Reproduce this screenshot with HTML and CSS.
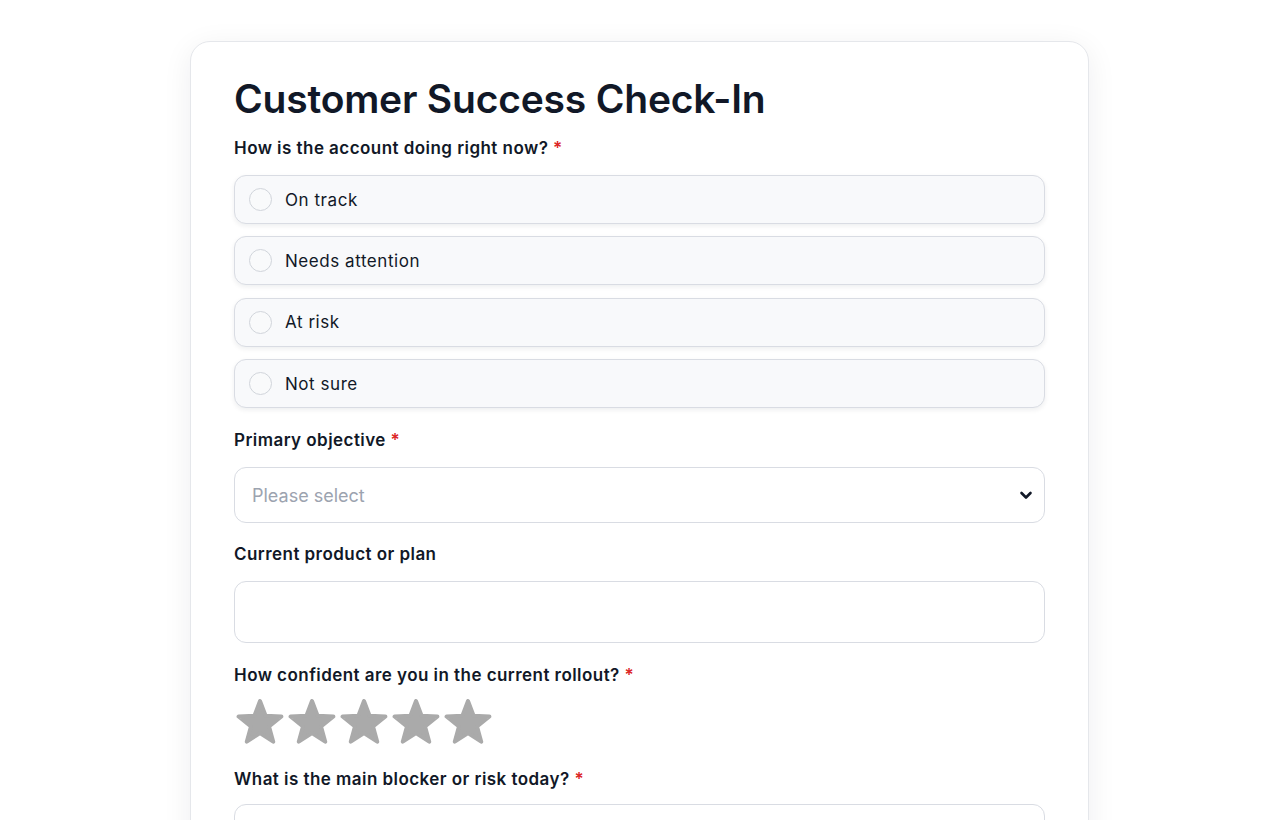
FILE: index.html
```html
<!DOCTYPE html>
<html lang="en">
<head>
  <meta charset="UTF-8">
  <meta name="viewport" content="width=device-width, initial-scale=1.0">
  <title>Customer Success Check-In</title>
  <link rel="stylesheet" href="styles.css">
</head>
<body>
  <div class="form-card">
    <h1>Customer Success Check-In</h1>

    <!-- Статус акаунта -->
    <div class="field field-options">
      <label class="field-label">How is the account doing right now? <span class="req">*</span></label>
      <div class="options">
        <label class="option"><span class="radio"></span>On track</label>
        <label class="option"><span class="radio"></span>Needs attention</label>
        <label class="option"><span class="radio"></span>At risk</label>
        <label class="option"><span class="radio"></span>Not sure</label>
      </div>
    </div>

    <div class="field">
      <label class="field-label">Primary objective <span class="req">*</span></label>
      <div class="select-box">
        <span class="placeholder">Please select</span>
        <svg class="chevron" width="16" height="16" viewBox="0 0 16 16">
          <path d="M3.5 6 L8 10.5 L12.5 6" fill="none" stroke="#111827" stroke-width="2.6" stroke-linecap="round" stroke-linejoin="round"/>
        </svg>
      </div>
    </div>

    <div class="field field-input">
      <label class="field-label">Current product or plan</label>
      <div class="text-input"></div>
    </div>

    <!-- Рейтинг -->
    <div class="field">
      <label class="field-label">How confident are you in the current rollout? <span class="req">*</span></label>
      <div class="stars">
        <svg class="star" viewBox="0 0 52 46"><path d="M26 2 L31.58 16.81 L47.4 17.55 L35.04 27.44 L39.23 42.7 L26 34 L12.77 42.7 L16.96 27.44 L4.6 17.55 L20.42 16.81 Z"/></svg>
        <svg class="star" viewBox="0 0 52 46"><path d="M26 2 L31.58 16.81 L47.4 17.55 L35.04 27.44 L39.23 42.7 L26 34 L12.77 42.7 L16.96 27.44 L4.6 17.55 L20.42 16.81 Z"/></svg>
        <svg class="star" viewBox="0 0 52 46"><path d="M26 2 L31.58 16.81 L47.4 17.55 L35.04 27.44 L39.23 42.7 L26 34 L12.77 42.7 L16.96 27.44 L4.6 17.55 L20.42 16.81 Z"/></svg>
        <svg class="star" viewBox="0 0 52 46"><path d="M26 2 L31.58 16.81 L47.4 17.55 L35.04 27.44 L39.23 42.7 L26 34 L12.77 42.7 L16.96 27.44 L4.6 17.55 L20.42 16.81 Z"/></svg>
        <svg class="star" viewBox="0 0 52 46"><path d="M26 2 L31.58 16.81 L47.4 17.55 L35.04 27.44 L39.23 42.7 L26 34 L12.77 42.7 L16.96 27.44 L4.6 17.55 L20.42 16.81 Z"/></svg>
      </div>
    </div>

    <div class="field field-last">
      <label class="field-label">What is the main blocker or risk today? <span class="req">*</span></label>
      <div class="text-area"></div>
    </div>
  </div>
</body>
</html>
```

FILE: styles.css
```css
* {
  margin: 0;
  padding: 0;
  box-sizing: border-box;
}

body {
  font-family: Inter, "Noto Sans", sans-serif;
  background: #ffffff;
  color: #111827;
  padding-top: 41px;
  overflow: hidden;
}

.form-card {
  width: 899px;
  margin-left: 190px;
  background: #fff;
  border: 1px solid #e5e7eb;
  border-radius: 20px;
  box-shadow: 0 6px 30px rgba(17, 24, 39, 0.07);
  padding: 34px 43px 40px 43px;
}

h1 {
  font-size: 39px;
  font-weight: 600;
  letter-spacing: -0.2px;
  color: #111827;
  line-height: 46px;
  margin-bottom: 15px;
}

.field {
  margin-bottom: 20px;
}

.field-options {
  margin-bottom: 21px;
}

.field-input {
  margin-bottom: 21px;
}

.field-label {
  display: block;
  font-size: 17px;
  font-weight: 600;
  letter-spacing: 0.45px;
  line-height: 22px;
  color: #111827;
  margin-bottom: 16px;
}

.field-last .field-label {
  margin-bottom: 14px;
}

.req {
  color: #dc2626;
}

.options {
  display: flex;
  flex-direction: column;
  gap: 12.4px;
}

.option {
  display: flex;
  align-items: center;
  height: 49px;
  padding-left: 14px;
  background: #f8f9fb;
  border: 1px solid #d9dce3;
  border-radius: 12px;
  box-shadow: 0 2px 5px rgba(17, 24, 39, 0.07);
  font-size: 17px;
  letter-spacing: 0.55px;
  color: #111827;
}

.radio {
  width: 23px;
  height: 23px;
  border: 1px solid #d1d5db;
  border-radius: 50%;
  background: #f9fafb;
  margin-right: 13px;
}

.select-box {
  display: flex;
  align-items: center;
  justify-content: space-between;
  height: 56px;
  padding: 0 10px 0 17px;
  border: 1px solid #d9dce3;
  border-radius: 12px;
  background: #fff;
  font-size: 18px;
}

.placeholder {
  color: #9ca3af;
}

.text-input {
  height: 62px;
  border: 1px solid #d9dce3;
  border-radius: 12px;
  background: #fff;
}

.stars {
  display: flex;
  margin-top: -3px;
  margin-bottom: 23px;
}

.star {
  width: 52px;
  height: 46px;
}

.star path {
  fill: #aaaaaa;
  stroke: #aaaaaa;
  stroke-width: 4;
  stroke-linejoin: round;
}

.text-area {
  height: 120px;
  border: 1px solid #d9dce3;
  border-radius: 12px;
  background: #fff;
}
```
